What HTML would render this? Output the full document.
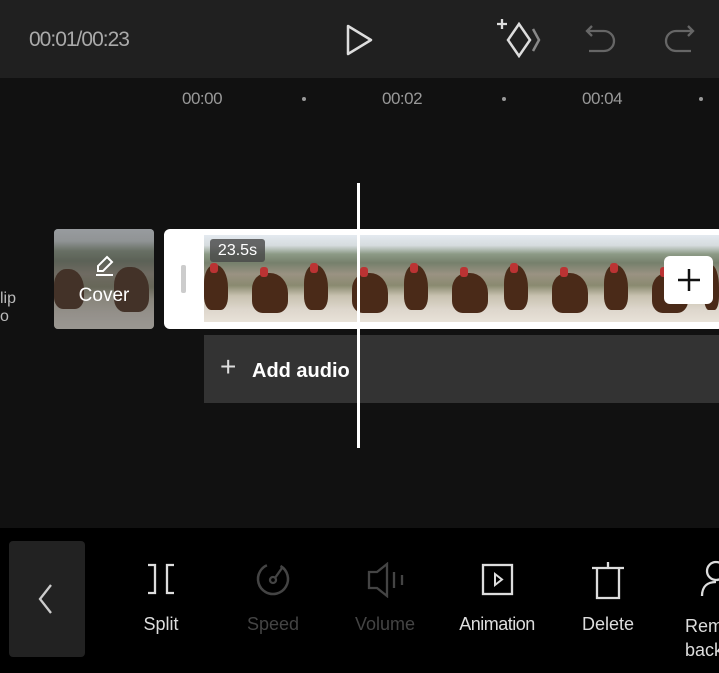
<!DOCTYPE html>
<html><head><style>
*{margin:0;padding:0;box-sizing:border-box}
body{width:719px;height:673px;background:#111;position:relative;overflow:hidden;font-family:"Liberation Sans",Roboto,sans-serif;color:#fff}
.a{position:absolute}
.frame{position:absolute;top:235px;height:87px;width:100px;overflow:hidden;background:
linear-gradient(180deg,#e4eaf0 0%,#d6dcde 12%,#8c9a86 22%,#76806c 32%,#9a9282 45%,#8a8a70 58%,#c8c2b0 70%,#ddd6cc 85%,#e8e2d8 100%)}
.frame i{position:absolute;background:#4a2a18;border-radius:40% 50% 30% 30%}
.frame b{position:absolute;background:#b33;width:8px;height:10px;border-radius:3px}
.t{position:absolute;font-size:18px;text-align:center;width:100px}
</style></head><body>
<div class="a" style="left:0;top:0;width:719px;height:78px;background:#202020"></div>
<div class="a" style="left:29px;top:28px;font-size:21px;color:#aaa;letter-spacing:-1px">00:01/00:23</div>
<svg class="a" style="left:344px;top:24px" width="32" height="32" viewBox="0 0 32 32"><path d="M4 2 L27 16 L4 30 Z" fill="none" stroke="#ddd" stroke-width="2.5" stroke-linejoin="round"/></svg>
<svg class="a" style="left:494px;top:16px" width="50" height="42" viewBox="0 0 50 42"><path d="M3 8h10M8 3v10" stroke="#ddd" stroke-width="2.3"/><path d="M25 8 L36 24 L25 40 L14 24 Z" fill="none" stroke="#ddd" stroke-width="2.5"/><path d="M39 13 L45 24 L39 35" fill="none" stroke="#888" stroke-width="2.5"/></svg>
<svg class="a" style="left:584px;top:22px" width="34" height="34" viewBox="0 0 34 34"><path d="M8 4 L3 9 L8 14 M3 9 H20 A8 8 0 0 1 20 29 H5" fill="none" stroke="#666" stroke-width="2.3"/></svg>
<svg class="a" style="left:662px;top:22px" width="34" height="34" viewBox="0 0 34 34"><path d="M26 4 L31 9 L26 14 M31 9 H14 A8 8 0 0 0 14 29 H29" fill="none" stroke="#666" stroke-width="2.3"/></svg>
<div class="a" style="left:182px;top:89px;font-size:17px;color:#999;letter-spacing:-0.5px">00:00</div>
<div class="a" style="left:382px;top:89px;font-size:17px;color:#999;letter-spacing:-0.5px">00:02</div>
<div class="a" style="left:582px;top:89px;font-size:17px;color:#999;letter-spacing:-0.5px">00:04</div>
<div class="a" style="left:302px;top:97px;width:4px;height:4px;background:#999;border-radius:2px"></div>
<div class="a" style="left:502px;top:97px;width:4px;height:4px;background:#999;border-radius:2px"></div>
<div class="a" style="left:699px;top:97px;width:4px;height:4px;background:#999;border-radius:2px"></div>
<div class="a" style="left:0;top:290px;font-size:16px;color:#bbb;line-height:18px">lip<br>o</div>
<div class="a" style="left:54px;top:229px;width:100px;height:100px;border-radius:4px;overflow:hidden">
<div class="frame" style="top:0;left:0;height:100px"><i style="left:0;top:40px;width:30px;height:40px"></i><i style="left:60px;top:38px;width:35px;height:45px"></i></div><div class="a" style="inset:0;background:rgba(60,60,60,.45)"></div>
<svg class="a" style="left:39px;top:24px" width="24" height="24" viewBox="0 0 24 24"><path d="M14 4 L19 9 L10 18 H5 V13 Z M3 22 H20" fill="none" stroke="#fff" stroke-width="2"/></svg>
<div class="a" style="left:0;width:100px;top:56px;text-align:center;font-size:19px">Cover</div></div>
<div class="a" style="left:164px;top:229px;width:560px;height:100px;background:#fff;border-radius:6px"></div>
<div class="a" style="left:181px;top:265px;width:5px;height:28px;background:#ccc;border-radius:2px"></div>
<div class="frame" style="left:204px"><i style="left:0;top:30px;width:24px;height:45px"></i><b style="left:6px;top:28px"></b><i style="left:48px;top:38px;width:36px;height:40px"></i><b style="left:56px;top:32px"></b></div>
<div class="frame" style="left:304px"><i style="left:0;top:30px;width:24px;height:45px"></i><b style="left:6px;top:28px"></b><i style="left:48px;top:38px;width:36px;height:40px"></i><b style="left:56px;top:32px"></b></div>
<div class="frame" style="left:404px"><i style="left:0;top:30px;width:24px;height:45px"></i><b style="left:6px;top:28px"></b><i style="left:48px;top:38px;width:36px;height:40px"></i><b style="left:56px;top:32px"></b></div>
<div class="frame" style="left:504px"><i style="left:0;top:30px;width:24px;height:45px"></i><b style="left:6px;top:28px"></b><i style="left:48px;top:38px;width:36px;height:40px"></i><b style="left:56px;top:32px"></b></div>
<div class="frame" style="left:604px"><i style="left:0;top:30px;width:24px;height:45px"></i><b style="left:6px;top:28px"></b><i style="left:48px;top:38px;width:36px;height:40px"></i><b style="left:56px;top:32px"></b></div>
<div class="frame" style="left:704px"><i style="left:0;top:30px;width:15px;height:45px"></i></div>
<div class="a" style="left:210px;top:239px;width:55px;height:23px;background:rgba(70,70,70,.8);border-radius:3px;font-size:16px;text-align:center;line-height:23px">23.5s</div>
<div class="a" style="left:664px;top:256px;width:49px;height:48px;background:#fff;border-radius:6px"></div>
<svg class="a" style="left:676px;top:267px" width="26" height="26"><path d="M13 2V24M2 13H24" stroke="#111" stroke-width="2.5"/></svg>
<div class="a" style="left:204px;top:335px;width:515px;height:68px;background:#333"></div>
<div class="a" style="left:220px;top:352px;font-size:28px;color:#ddd;line-height:30px">+</div>
<div class="a" style="left:252px;top:360px;font-size:20px;font-weight:bold">Add audio</div>
<div class="a" style="left:357px;top:183px;width:3px;height:265px;background:#fff"></div>
<div class="a" style="left:0;top:528px;width:719px;height:145px;background:#000"></div>
<div class="a" style="left:9px;top:541px;width:76px;height:116px;background:#222;border-radius:4px"></div>
<svg class="a" style="left:36px;top:582px" width="20" height="34"><path d="M15 3 L4 17 L15 31" fill="none" stroke="#ccc" stroke-width="2.3"/></svg>
<svg class="a" style="left:145px;top:562px" width="32" height="34"><path d="M3 3H10V31H3M29 3H22V31H29" fill="none" stroke="#ddd" stroke-width="2.3"/></svg>
<div class="t" style="left:111px;top:614px;color:#ddd">Split</div>
<svg class="a" style="left:254px;top:560px" width="38" height="38"><circle cx="19" cy="19" r="15" fill="none" stroke="#444" stroke-width="2.5" stroke-dasharray="80 20" transform="rotate(-60 19 19)"/><circle cx="19" cy="20" r="3" fill="none" stroke="#444" stroke-width="2.3"/><path d="M21 18 L28 8" stroke="#444" stroke-width="2.3"/></svg>
<div class="t" style="left:223px;top:614px;color:#444">Speed</div>
<svg class="a" style="left:365px;top:562px" width="44" height="36"><path d="M4 10H12L22 2V34L12 26H4Z" fill="none" stroke="#444" stroke-width="2.3"/><path d="M29 10V26M37 13V23" stroke="#444" stroke-width="2.3"/></svg>
<div class="t" style="left:335px;top:614px;color:#444">Volume</div>
<svg class="a" style="left:480px;top:562px" width="36" height="36"><rect x="3" y="3" width="29" height="29" fill="none" stroke="#ddd" stroke-width="2.3"/><path d="M15 12L22 17.5L15 23Z" fill="none" stroke="#ddd" stroke-width="2"/></svg>
<div class="t" style="left:447px;top:614px;color:#ddd;letter-spacing:-0.5px">Animation</div>
<svg class="a" style="left:590px;top:560px" width="36" height="40"><path d="M2 8H34M18 2V8M7 8V38H29V8" fill="none" stroke="#ddd" stroke-width="2.3"/></svg>
<div class="t" style="left:558px;top:614px;color:#ddd">Delete</div>
<svg class="a" style="left:700px;top:558px" width="19" height="40"><circle cx="16" cy="13" r="9" fill="none" stroke="#ddd" stroke-width="2.3"/><path d="M2 38 C2 28 8 24 16 24" fill="none" stroke="#ddd" stroke-width="2.3"/></svg>
<div class="a" style="left:685px;top:614px;font-size:18px;color:#ddd;line-height:24px">Rem<br>back</div>
</body></html>
